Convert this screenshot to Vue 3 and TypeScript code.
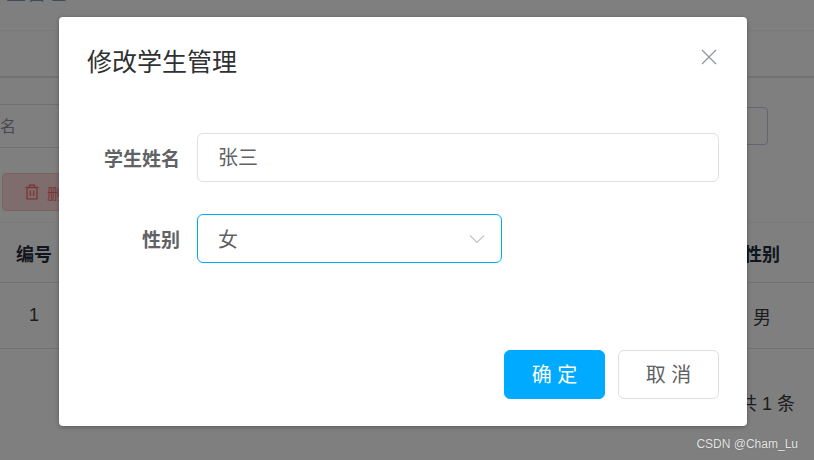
<script setup lang="ts">
import { ref } from 'vue';

const studentName = ref('张三');
const gender = ref('女');
const rows = [{ id: 1, gender: '男' }];
</script>

<template>
  <div class="page">
    <header class="page-header"><span class="crumb">学生管理</span></header>
    <div class="tabs"></div>
    <section class="content">
      <div class="search-row">
        <div class="search-input">学生姓名</div>
        <div class="search-btn"></div>
      </div>
      <div class="toolbar">
        <button class="danger-btn" type="button">
          <svg class="trash" viewBox="0 0 16 16" width="16" height="16" fill="none" stroke="currentColor" stroke-width="1.3">
            <path d="M1.5 3.5h13M5.5 3.5V1.2h5v2.3M3 3.5v11.3h10V3.5M6.3 6.5v5.5M9.7 6.5v5.5" />
          </svg>
          <span>删除</span>
        </button>
      </div>
      <div class="table-row head">
        <span>编号</span><span></span><span>性别</span><span></span>
      </div>
      <div v-for="row in rows" :key="row.id" class="table-row body">
        <span>{{ row.id }}</span><span></span><span>{{ row.gender }}</span><span></span>
      </div>
      <div class="pager">共 1 条</div>
    </section>

    <div class="mask">
      <div class="dialog" role="dialog" aria-label="修改学生管理">
        <div class="dialog-head">
          <h2 class="dialog-title">修改学生管理</h2>
          <svg class="close" viewBox="0 0 16 16" width="16" height="16" fill="none" stroke="currentColor" stroke-width="1.2">
            <path d="M1 1l14 14M15 1L1 15" />
          </svg>
        </div>
        <form class="form" @submit.prevent>
          <div class="field">
            <label class="field-label">学生姓名</label>
            <div class="control wide">{{ studentName }}</div>
          </div>
          <div class="field">
            <label class="field-label">性别</label>
            <div class="control select">
              <span class="select-value">{{ gender }}</span>
              <svg class="caret" viewBox="0 0 16 10" width="16" height="10" fill="none" stroke="currentColor" stroke-width="1.2">
                <path d="M1 1.5l7 7 7-7" />
              </svg>
            </div>
          </div>
        </form>
        <div class="dialog-foot">
          <button class="btn primary" type="button">确 定</button>
          <button class="btn" type="button">取 消</button>
        </div>
      </div>
    </div>
    <div class="watermark">CSDN @Cham_Lu</div>
  </div>
</template>

<style scoped>
.page {
  position: relative;
  width: 814px;
  height: 460px;
  overflow: hidden;
  background: #fff;
  color: #303133;
  font-family: "Liberation Sans", "Noto Sans CJK SC", sans-serif;
}
.page-header {
  height: 30px;
  padding-left: 3px;
  border-bottom: 1px solid #f2f2f2;
  overflow: hidden;
}
.crumb {
  display: block;
  margin: -19px 0 0 -17px;
  font-size: 20px;
  line-height: 24px;
  color: #8496b8;
}
.tabs {
  height: 45px;
  border-bottom: 2px solid #e4e4e6;
}
.content {
  display: flex;
  flex-direction: column;
}
.search-row {
  display: flex;
  justify-content: space-between;
  align-items: center;
  margin-top: 26px;
  padding-right: 46px;
}
.search-input {
  width: 300px;
  height: 42px;
  margin-left: -49px;
  border: 1px solid #dcdfe6;
  font-size: 16px;
  line-height: 44px;
  color: #909399;
}
.search-btn {
  width: 100px;
  height: 36px;
  border: 1px solid #c8cde0;
  border-radius: 4px;
}
.toolbar {
  margin-top: 25px;
  padding-left: 2px;
}
.danger-btn {
  display: flex;
  align-items: center;
  gap: 7px;
  width: 130px;
  height: 38px;
  padding: 0 0 0 21px;
  border: 1px solid #fbc4c4;
  border-radius: 4px;
  background: #ffd9d9;
  color: #f56c6c;
  font: 15px "Liberation Sans", "Noto Sans CJK SC", sans-serif;
}
.trash {
  flex: none;
}
.table-row {
  display: grid;
  grid-template-columns: 68px 1fr 68px 18px;
  align-items: center;
  text-align: center;
  font-size: 18px;
  border-bottom: 1px solid #dfe6ec;
}
.table-row.head {
  height: 59px;
  margin-top: 11px;
  border-top: 1px solid #f5f5f5;
  font-weight: 700;
  color: #1f2d3d;
}
.table-row.body {
  height: 65px;
  color: #3a3a3a;
}
.pager {
  margin-top: 43px;
  padding-right: 19px;
  text-align: right;
  font-size: 18px;
  line-height: 24px;
  color: #3a3a3a;
}
.mask {
  position: absolute;
  inset: 0;
  padding: 17px 0 0 59px;
  background: rgba(0, 0, 0, 0.5);
}
.dialog {
  display: flex;
  flex-direction: column;
  width: 688px;
  height: 409px;
  box-sizing: border-box;
  padding: 0 28px 27px;
  border-radius: 4px;
  background: #fff;
  box-shadow: 0 1px 4px rgba(0, 0, 0, 0.3);
}
.dialog-head {
  display: flex;
  justify-content: space-between;
  align-items: center;
  height: 89px;
  flex: none;
}
.dialog-title {
  margin: 0;
  font-size: 25px;
  font-weight: 400;
  line-height: 32px;
  color: #303133;
}
.close {
  margin: -9px 2px 0 0;
  color: #8f949e;
}
.form {
  display: flex;
  flex-direction: column;
  gap: 32px;
  margin-top: 27px;
}
.field {
  display: flex;
  align-items: flex-start;
}
.field-label {
  width: 93px;
  height: 49px;
  flex: none;
  padding-right: 17px;
  text-align: right;
  font-size: 19px;
  font-weight: 700;
  line-height: 53px;
  color: #606266;
}
.control {
  box-sizing: border-box;
  height: 49px;
  padding: 2px 20px 0;
  border: 1px solid #dcdfe6;
  border-radius: 6px;
  font-size: 20px;
  line-height: 45px;
  color: #606266;
}
.control.wide {
  width: 522px;
}
.control.select {
  display: flex;
  align-items: center;
  justify-content: space-between;
  width: 305px;
  padding: 0 16px 0 20px;
  border-color: #00aaff;
}
.select-value {
  margin-top: 4px;
}
.caret {
  color: #c0c4cc;
}
.dialog-foot {
  display: flex;
  justify-content: flex-end;
  gap: 13px;
  margin-top: auto;
}
.btn {
  width: 101px;
  height: 49px;
  padding: 0 0 2px;
  border: 1px solid #dcdfe6;
  border-radius: 6px;
  background: #fff;
  color: #606266;
  font: 20px "Liberation Sans", "Noto Sans CJK SC", sans-serif;
}
.btn.primary {
  border-color: #00aaff;
  background: #00aaff;
  color: #fff;
}
.watermark {
  position: absolute;
  right: 16px;
  bottom: 8px;
  font-size: 12px;
  line-height: 16px;
  color: #e6e6e6;
  text-shadow: 0 0 1px #555;
}
</style>
